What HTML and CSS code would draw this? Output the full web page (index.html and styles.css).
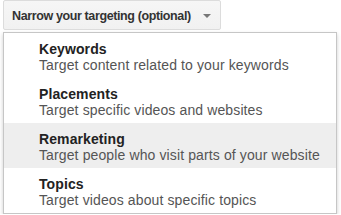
FILE: index.html
```html
<!DOCTYPE html>
<html>
<head>
<meta charset="utf-8">
<link rel="stylesheet" href="styles.css">
</head>
<body>
<div class="wrap">
  <button class="btn"><span class="label">Narrow your targeting (optional)</span><span class="caret"></span></button>
  <ul class="menu">
    <li class="item"><div class="title">Keywords</div><div class="desc">Target content related to your keywords</div></li>
    <li class="item"><div class="title">Placements</div><div class="desc">Target specific videos and websites</div></li>
    <li class="item active"><div class="title">Remarketing</div><div class="desc">Target people who visit parts of your website</div></li>
    <li class="item"><div class="title">Topics</div><div class="desc">Target videos about specific topics</div></li>
  </ul>
</div>
</body>
</html>
```

FILE: styles.css
```css
html, body {
  margin: 0;
  padding: 0;
  background: #fff;
  font-family: "Liberation Sans", Arial, sans-serif;
}
.wrap {
  padding-left: 3px;
  display: flex;
  flex-direction: column;
  align-items: flex-start;
}
.btn {
  display: flex;
  align-items: center;
  box-sizing: border-box;
  width: 218px;
  height: 30px;
  margin: 0;
  padding: 0 0 0 8px;
  border: 1px solid #dcdcdc;
  border-radius: 2px;
  background: linear-gradient(#f6f6f6, #f1f1f1);
  color: #333;
  font-family: "Liberation Sans", Arial, sans-serif;
  font-weight: bold;
  font-size: 12.5px;
  letter-spacing: -0.38px;
  line-height: 28px;
  white-space: nowrap;
}
.label {
  padding-top: 2px;
}
.caret {
  flex: none;
  width: 0;
  height: 0;
  margin-left: 12px;
  margin-top: 2px;
  border-left: 4px solid transparent;
  border-right: 4px solid transparent;
  border-top: 4px solid #777;
}
.menu {
  list-style: none;
  margin: 2px 0 0 0;
  padding: 0;
  box-sizing: border-box;
  width: 334px;
  border: 1px solid #c6c6c6;
  background: #fff;
  box-shadow: 0 2px 4px rgba(0,0,0,0.2);
}
.item {
  height: 45px;
  box-sizing: border-box;
  padding: 8px 0 0 35px;
}
.item.active {
  background: #eeeeee;
}
.title {
  font-weight: bold;
  font-size: 14px;
  line-height: 16px;
  color: #222;
  letter-spacing: 0.1px;
}
.desc {
  font-size: 14px;
  line-height: 16px;
  color: #555;
  letter-spacing: 0.12px;
}
```
